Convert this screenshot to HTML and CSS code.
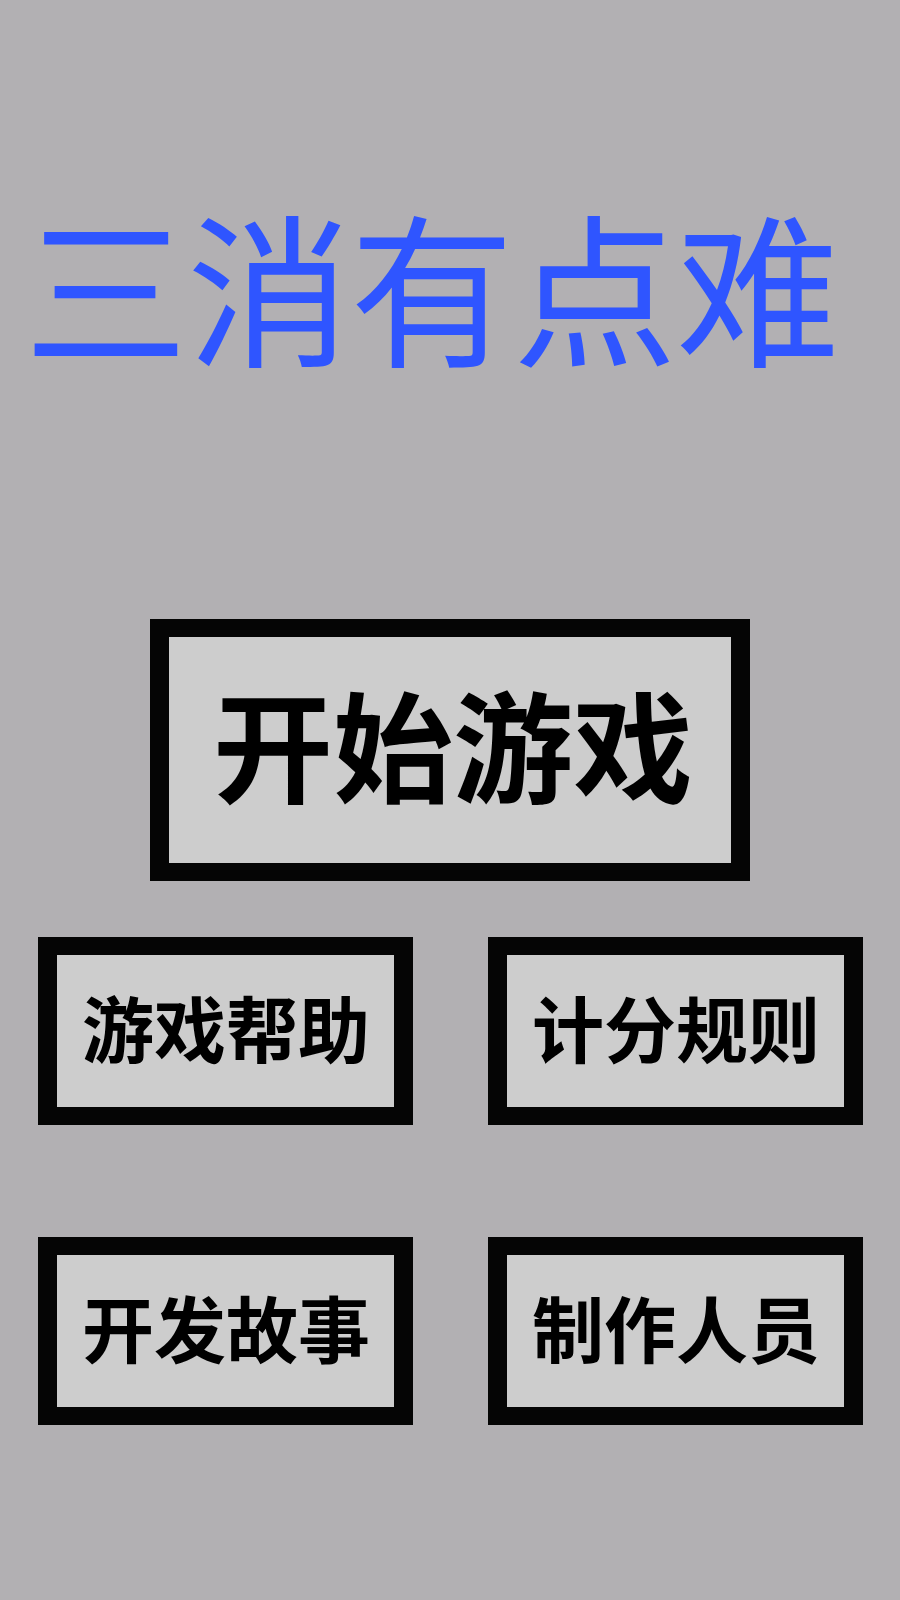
FILE: index.html
```html
<!DOCTYPE html>
<html lang="zh-CN">
<head>
    <meta charset="UTF-8">
    <meta name="viewport" content="width=device-width, initial-scale=1.0">
    <title>三消有点难</title>
    <link rel="stylesheet" href="styles.css">
</head>
<body>
    <main class="menu">
        <h1 class="game-title">三消有点难</h1>

        <button class="btn btn-start">开始游戏</button>

        <div class="btn-grid">
            <button class="btn btn-small">游戏帮助</button>
            <button class="btn btn-small">计分规则</button>
            <button class="btn btn-small">开发故事</button>
            <button class="btn btn-small">制作人员</button>
        </div>
    </main>
</body>
</html>
```

FILE: styles.css
```css
* {
    margin: 0;
    padding: 0;
    box-sizing: border-box;
}

body {
    font-family: "Noto Sans CJK SC", "Noto Sans", sans-serif;
    background: #b2b0b3;
    min-height: 100vh;
}

.menu {
    display: flex;
    flex-direction: column;
    align-items: center;
    padding-top: 201px;
}

.game-title {
    align-self: flex-start;
    padding-left: 24px;
    font-size: 164px;
    font-weight: 400;
    line-height: 1;
    color: #2f55ff;
    letter-spacing: -1px;
}

/* chunky black-framed menu buttons */
.btn {
    font-family: inherit;
    font-weight: 700;
    color: #000;
    background: #cdcdcd;
    border: solid #050505;
    border-width: 18px 19px;
    cursor: pointer;
    display: flex;
    align-items: center;
    justify-content: center;
    line-height: 1;
}

.btn-start {
    width: 600px;
    height: 262px;
    margin-top: 254px;
    padding: 0 0 16px 6px;
    font-size: 120px;
}

.btn-grid {
    display: grid;
    grid-template-columns: 375px 375px;
    column-gap: 75px;
    row-gap: 112px;
    margin-top: 56px;
}

.btn-small {
    height: 188px;
    padding: 0 0 10px 2px;
    font-size: 72px;
}
```
